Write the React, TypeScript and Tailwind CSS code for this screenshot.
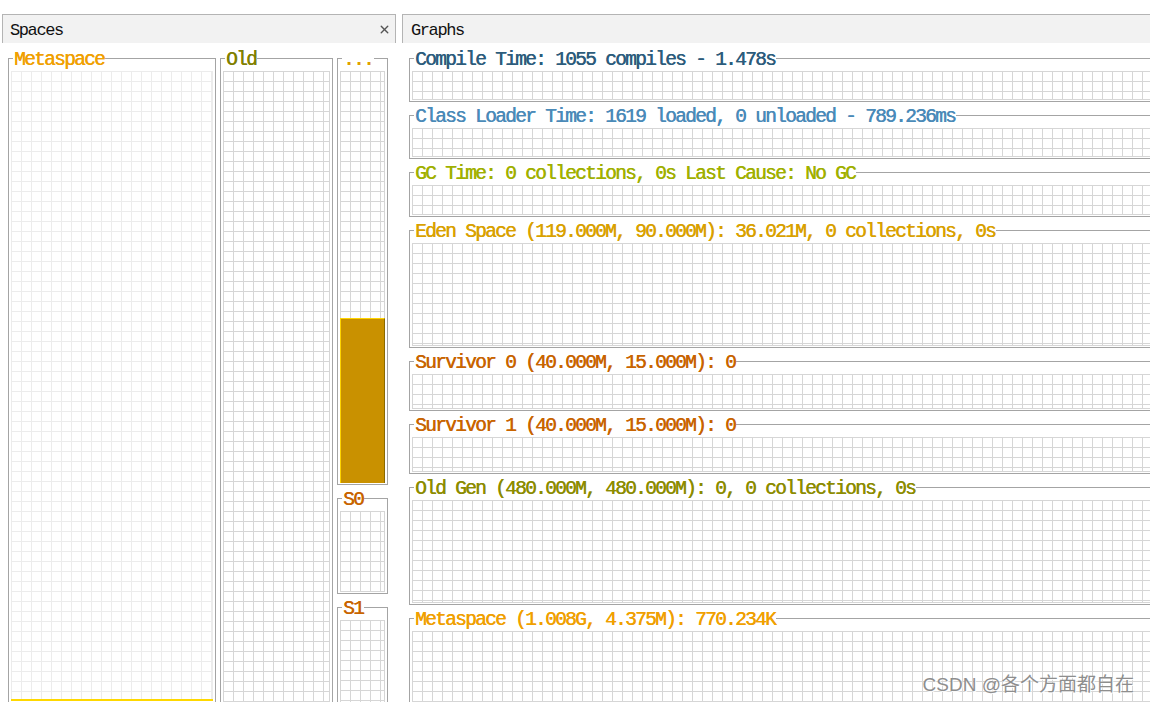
import React from "react";
import { X } from "lucide-react";

const gridDark =
  "border border-[#d6d6d6] bg-origin-border bg-[linear-gradient(to_right,#d6d6d6_1px,transparent_1px),linear-gradient(to_bottom,#d6d6d6_1px,transparent_1px)] bg-size-[10px_10px]";
const gridLight =
  "border border-[#ececec] bg-origin-border bg-[linear-gradient(to_right,#ececec_1px,transparent_1px),linear-gradient(to_bottom,#ececec_1px,transparent_1px)] bg-size-[10px_10px]";

const legendCls =
  "ml-[2px] px-px leading-[20px] text-[19.5px] tracking-[-1.7px] whitespace-nowrap font-['Liberation_Mono',monospace] [text-shadow:0.4px_0_0_currentColor]";

type BoxProps = {
  title: string;
  color: string;
  className?: string;
  children?: React.ReactNode;
};

function SpaceBox({ title, color, className, children }: BoxProps) {
  return (
    <fieldset
      className={`border border-[#a4a4a4] px-[2px] pt-[3px] pb-px min-w-0 ${className ?? ""}`}
    >
      <legend className={`${legendCls} ${color}`}>
        <span className="relative top-[2px]">{title}</span>
      </legend>
      {children}
    </fieldset>
  );
}

function GraphBox({ title, color, className, children }: BoxProps) {
  return (
    <fieldset
      className={`border-y border-l border-r-0 border-[#a4a4a4] pl-[2px] pt-[3px] pb-px min-w-0 ${className ?? ""}`}
    >
      <legend className={`${legendCls} ${color}`}>
        <span className="relative top-[2px]">{title}</span>
      </legend>
      {children}
    </fieldset>
  );
}

const graphs: { title: string; color: string; h: string }[] = [
  { title: "Compile Time: 1055 compiles - 1.478s", color: "text-[#2c5c7c]", h: "h-[29px]" },
  { title: "Class Loader Time: 1619 loaded, 0 unloaded - 789.236ms", color: "text-[#4a8ab8]", h: "h-[29px]" },
  { title: "GC Time: 0 collections, 0s Last Cause: No GC", color: "text-[#a0b000]", h: "h-[30px]" },
  { title: "Eden Space (119.000M, 90.000M): 36.021M, 0 collections, 0s", color: "text-[#d9a100]", h: "h-[103px]" },
  { title: "Survivor 0 (40.000M, 15.000M): 0", color: "text-[#c86400]", h: "h-[35px]" },
  { title: "Survivor 1 (40.000M, 15.000M): 0", color: "text-[#c86400]", h: "h-[35px]" },
  { title: "Old Gen (480.000M, 480.000M): 0, 0 collections, 0s", color: "text-[#8c8c00]", h: "h-[103px]" },
  { title: "Metaspace (1.008G, 4.375M): 770.234K", color: "text-[#f0a000]", h: "h-[100px]" },
];

export default function App() {
  return (
    <div className="relative w-[1150px] h-[702px] overflow-hidden bg-white flex pt-[14px] font-['Liberation_Mono',monospace]">
      {/* Spaces panel */}
      <div className="w-[394px] ml-[2px] shrink-0 flex flex-col">
        <div className="h-[29px] shrink-0 border-t border-x border-[#b4b4b4] bg-[#f2f2f2] flex items-center justify-between pl-[7px] pr-[4px] pt-[3px] text-[17px] tracking-[-1.4px] text-[#111]">
          <span>Spaces</span>
          <X size={13} strokeWidth={2.6} className="text-[#555] -mt-[2px]" />
        </div>
        <div className="flex gap-[4px] pl-[6px] pt-[5px]">
          <SpaceBox title="Metaspace" color="text-[#f0a000]" className="w-[208px] shrink-0">
            <div className={`relative h-[630px] ${gridLight}`}>
              <div className="absolute -left-px -right-px -bottom-px h-[2px] bg-[#ffd800]" />
            </div>
          </SpaceBox>
          <SpaceBox title="Old" color="text-[#808000]" className="w-[113px] shrink-0">
            <div className={`h-[640px] ${gridDark}`} />
          </SpaceBox>
          <div className="w-[51px] shrink-0 flex flex-col gap-[3px]">
            <SpaceBox title="..." color="text-[#e0a000]">
              <div className={`relative h-[412px] ${gridDark}`}>
                <div className="absolute -left-px -right-px -bottom-px h-[165px] bg-[#c99100] border-t border-l border-[#ffd400] border-r border-r-[#8b6a00]" />
              </div>
            </SpaceBox>
            <SpaceBox title="S0" color="text-[#c86400]">
              <div className={`h-[81px] ${gridDark}`} />
            </SpaceBox>
            <SpaceBox title="S1" color="text-[#c86400]">
              <div className={`h-[100px] ${gridDark}`} />
            </SpaceBox>
          </div>
        </div>
      </div>

      {/* Graphs panel */}
      <div className="flex-1 ml-[6px] min-w-0 flex flex-col">
        <div className="h-[29px] shrink-0 border-t border-l border-[#b4b4b4] bg-[#f2f2f2] flex items-center pl-[8px] pt-[3px] text-[17px] tracking-[-1.4px] text-[#111]">
          <span>Graphs</span>
        </div>
        <div className="flex flex-col gap-[3px] pl-[7px] pt-[5px]">
          {graphs.map((g) => (
            <GraphBox key={g.title} title={g.title} color={g.color}>
              <div className={`${g.h} ${gridDark} border-r-0`} />
            </GraphBox>
          ))}
        </div>
      </div>

      <div className="absolute right-[16px] bottom-[8px] text-[19px] leading-none text-[#8e8e8e] [text-shadow:1px_1px_0_rgba(255,255,255,0.9)] font-['Liberation_Sans','Noto_Sans_CJK_SC',sans-serif]">
        CSDN @各个方面都自在
      </div>
    </div>
  );
}
